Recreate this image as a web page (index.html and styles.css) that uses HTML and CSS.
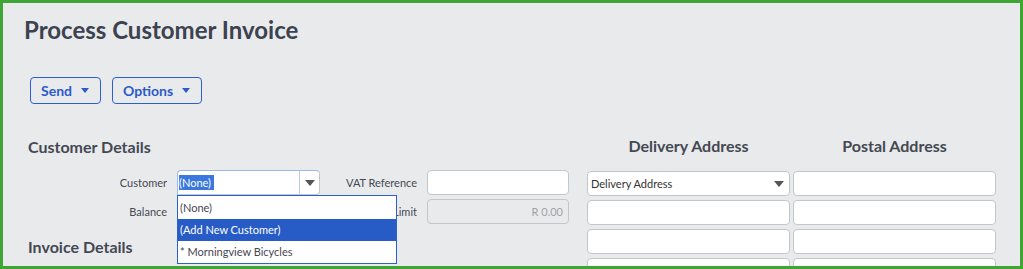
FILE: index.html
```html
<!DOCTYPE html>
<html lang="en">
<head>
    <meta charset="UTF-8">
    <meta name="viewport" content="width=device-width, initial-scale=1.0">
    <title>Process Customer Invoice</title>
    <link rel="stylesheet" href="styles.css">
</head>
<body>
    <div class="frame">
        <h1>Process Customer Invoice</h1>
        <div class="toolbar">
            <button class="menu-btn">Send <span class="caret"></span></button>
            <button class="menu-btn">Options <span class="caret"></span></button>
        </div>
        <div class="details">
            <div class="left-col">
                <h2>Customer Details</h2>
                <div class="row">
                    <label class="lbl">Customer</label>
                    <div class="combo">
                        <div class="select focused">
                            <span class="sel-text">(None)</span>
                            <span class="arrow-box"><span class="arrow"></span></span>
                        </div>
                        <ul class="dropdown">
                            <li>(None)</li>
                            <li class="active">(Add New Customer)</li>
                            <li>* Morningview Bicycles</li>
                        </ul>
                    </div>
                    <label class="lbl lbl-mid">VAT Reference</label>
                    <input class="field" type="text">
                </div>
                <div class="row">
                    <label class="lbl">Balance</label>
                    <div class="spacer"></div>
                    <label class="lbl lbl-mid">Credit Limit</label>
                    <input class="field disabled" type="text" value="R 0.00" disabled>
                </div>
                <h2 class="sub">Invoice Details</h2>
            </div>
            <div class="right-col">
                <div class="addr-heads">
                    <h3>Delivery Address</h3>
                    <h3>Postal Address</h3>
                </div>
                <div class="addr-grid">
                    <div class="select plain">
                        <span class="sel-plain">Delivery Address</span>
                        <span class="arrow"></span>
                    </div>
                    <input class="field" type="text">
                    <input class="field" type="text">
                    <input class="field" type="text">
                    <input class="field" type="text">
                    <input class="field" type="text">
                    <input class="field" type="text">
                    <input class="field" type="text">
                </div>
            </div>
        </div>
    </div>
</body>
</html>
```

FILE: styles.css
```css
body {
    margin: 0;
    font-family: Lato, "Open Sans", sans-serif;
    color: #444852;
}

.frame {
    box-sizing: border-box;
    width: 1023px;
    height: 269px;
    border: 3px solid #3fa535;
    background: #e9eaec;
    overflow: hidden;
}

h1 {
    margin: 0;
    padding: 12px 0 0 21px;
    font-size: 24px;
    font-weight: 700;
    color: #3c4250;
    line-height: 30px;
}

.toolbar {
    display: flex;
    gap: 11px;
    padding: 32px 0 0 27px;
}

.menu-btn {
    display: flex;
    align-items: center;
    gap: 9px;
    height: 27px;
    padding: 0 11px 0 10px;
    background: transparent;
    border: 1px solid #2b5fd4;
    border-radius: 4px;
    color: #2b5bc9;
    font-family: Lato, sans-serif;
    font-size: 14px;
    font-weight: 700;
}

.caret {
    width: 0;
    height: 0;
    border-left: 4px solid transparent;
    border-right: 4px solid transparent;
    border-top: 5px solid #2b5bc9;
}

.details {
    display: flex;
    padding-top: 25px;
}

.left-col {
    width: 541px;
    padding-left: 25px;
}

h2 {
    margin: 0;
    font-size: 16px;
    font-weight: 700;
    line-height: 20px;
    color: #444852;
    padding-top: 8px;
    height: 33px;
}

h2.sub {
    padding-top: 9px;
}

.row {
    display: flex;
    align-items: center;
    height: 25px;
    margin-bottom: 4px;
}

.lbl {
    box-sizing: border-box;
    width: 149px;
    padding-right: 10px;
    text-align: right;
    font-size: 11px;
    color: #444852;
}

.lbl-mid {
    width: 107px;
}

.combo {
    position: relative;
    width: 143px;
}

.spacer {
    width: 143px;
}

.select {
    box-sizing: border-box;
    display: flex;
    align-items: center;
    height: 25px;
    background: #fff;
    border: 1px solid #c4c6cd;
    border-radius: 4px;
    font-size: 11px;
}

.select.focused {
    border-color: #9fb6e6 #c4c6cd #c4c6cd #9fb6e6;
    border-radius: 4px 4px 4px 0;
}

.sel-text {
    flex: 1;
    margin-left: 1px;
    line-height: 15px;
    color: #fff;
    background: linear-gradient(#3a78de, #3a78de) no-repeat 0 0 / 35px 100%;
}

.arrow-box {
    display: flex;
    align-items: center;
    justify-content: center;
    width: 19px;
    height: 23px;
    border-left: 1px solid #b7cbee;
}

.arrow {
    width: 0;
    height: 0;
    border-left: 5px solid transparent;
    border-right: 5px solid transparent;
    border-top: 6px solid #555;
}

.dropdown {
    position: absolute;
    top: 25px;
    left: 0;
    width: 220px;
    margin: 0;
    padding: 1px 0 0;
    list-style: none;
    background: #fff;
    border: 1px solid #2b5fd4;
    box-sizing: border-box;
    z-index: 2;
}

.dropdown li {
    height: 22px;
    line-height: 21px;
    padding-left: 2px;
    font-size: 11px;
    color: #444852;
}

.dropdown li.active {
    background: #275bc6;
    color: #fff;
}

.field {
    box-sizing: border-box;
    width: 142px;
    height: 25px;
    margin: 0;
    background: #fff;
    border: 1px solid #c4c6cd;
    border-radius: 4px;
    font-family: Lato, sans-serif;
    font-size: 11px;
}

.field.disabled {
    background: #e9eaec;
    color: #a0a2a8;
    text-align: right;
    padding-right: 5px;
}

.right-col {
    padding-left: 18px;
}

.addr-heads {
    display: flex;
    gap: 3px;
    height: 42px;
}

h3 {
    margin: 0;
    width: 203px;
    padding-top: 7px;
    text-align: center;
    font-size: 16px;
    font-weight: 700;
    color: #444852;
}

.addr-grid {
    display: grid;
    grid-template-columns: 203px 203px;
    column-gap: 3px;
    row-gap: 4px;
}

.addr-grid .field {
    width: 203px;
}

.select.plain {
    justify-content: space-between;
    padding: 0 5px 0 3px;
}

.sel-plain {
    font-size: 11px;
    color: #333;
}
```
